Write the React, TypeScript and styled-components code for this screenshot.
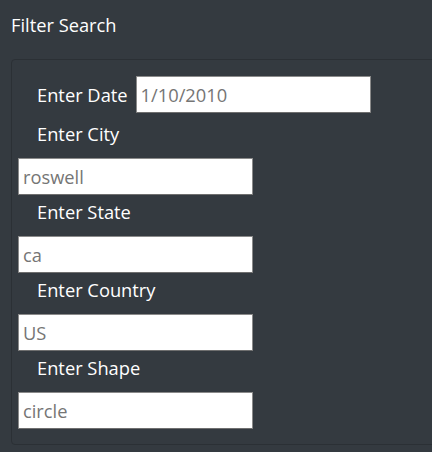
import React from "react";
import styled, { createGlobalStyle } from "styled-components";

const Global = createGlobalStyle`
  html, body {
    margin: 0;
    padding: 0;
    background: #343a40;
    overflow: hidden;
  }
  body {
    font-family: "Open Sans", "Noto Sans", sans-serif;
    color: #ffffff;
  }
`;

const Page = styled.form`
  width: 452px;
  padding: 0 0 0 11px;
  box-sizing: border-box;
`;

const Heading = styled.p`
  margin: 0;
  padding-top: 12px;
  height: 59px;
  box-sizing: border-box;
  font-size: 18.3px;
  line-height: 26px;
  color: #ffffff;
`;

const Panel = styled.ul`
  list-style: none;
  margin: 0;
  padding: 16px 0 15px 6px;
  border: 1px solid #2b3035;
  border-radius: 4px;
  background: #343a40;
`;

const Item = styled.li<{ $inline?: boolean }>`
  display: flex;
  flex-direction: ${(p) => (p.$inline ? "row" : "column")};
  align-items: ${(p) => (p.$inline ? "center" : "flex-start")};
  gap: ${(p) => (p.$inline ? "8px" : "0")};
`;

const Label = styled.label<{ $first?: boolean }>`
  display: block;
  padding-left: 19px;
  font-size: 18.3px;
  line-height: 26px;
  color: #ffffff;
  ${(p) => (p.$first ? "" : `padding-top: 4px; padding-bottom: 11px;`)}
`;

const Input = styled.input`
  width: 235px;
  height: 37px;
  box-sizing: border-box;
  margin: 0;
  padding: 0 4px;
  border: 1px solid #8a8a8a;
  border-bottom-color: #6f6f6f;
  background: #ffffff;
  font-family: "Open Sans", "Noto Sans", sans-serif;
  font-size: 18.3px;
  color: #757575;
  outline: none;
  &::placeholder {
    color: #757575;
  }
`;

const Spacer = styled.div`
  height: 4px;
`;

const fields = [
  { id: "city", label: "Enter City", placeholder: "roswell" },
  { id: "state", label: "Enter State", placeholder: "ca" },
  { id: "country", label: "Enter Country", placeholder: "US" },
  { id: "shape", label: "Enter Shape", placeholder: "circle" },
];

export default function App() {
  return (
    <>
      <Global />
      <Page onSubmit={(e) => e.preventDefault()}>
        <Heading>Filter Search</Heading>
        <Panel>
          <Item $inline>
            <Label $first htmlFor="datetime">Enter Date</Label>
            <Input id="datetime" type="text" placeholder="1/10/2010" />
          </Item>
          <Spacer />
          {fields.map((f) => (
            <Item key={f.id}>
              <Label htmlFor={f.id}>{f.label}</Label>
              <Input id={f.id} type="text" placeholder={f.placeholder} />
            </Item>
          ))}
        </Panel>
      </Page>
    </>
  );
}
